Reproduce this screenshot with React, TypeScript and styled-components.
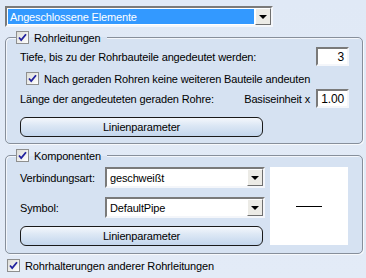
import styled, { createGlobalStyle } from 'styled-components';

const GlobalStyle = createGlobalStyle`
  html, body, #root {
    margin: 0;
    padding: 0;
  }
  body {
    background: linear-gradient(#e0e9f6, #e3ebf7);
    font-family: 'Liberation Sans', Arial, sans-serif;
    font-size: 11px;
    letter-spacing: -0.15px;
    color: #000;
  }
`;

const Page = styled.div`
  width: 366px;
  height: 278px;
  box-sizing: border-box;
  padding: 6px 3px 0 5px;
  display: flex;
  flex-direction: column;
`;

// sunken win32 style box
const Sunken = styled.div<{ $w: number; $h: number }>`
  width: ${p => p.$w}px;
  height: ${p => p.$h}px;
  box-sizing: border-box;
  border-style: solid;
  border-width: 2px;
  border-color: #7a7a7a #f4f6fa #f4f6fa #7a7a7a;
  background: #fff;
  display: flex;
  align-items: stretch;
`;

const ComboText = styled.div<{ $selected?: boolean }>`
  flex: 1;
  display: flex;
  align-items: center;
  padding-left: 2px;
  margin: 1px;
  background: ${p => (p.$selected ? '#3399ff' : '#fff')};
  color: ${p => (p.$selected ? '#fff' : '#000')};
  white-space: nowrap;
  overflow: hidden;
`;

const ArrowButton = styled.div`
  width: 16px;
  box-sizing: border-box;
  border-style: solid;
  border-width: 1px;
  border-color: #fff #6f6f6f #6f6f6f #fff;
  background: #ecebe6;
  display: flex;
  align-items: center;
  justify-content: center;
  &::after {
    content: '';
    border-left: 4px solid transparent;
    border-right: 4px solid transparent;
    border-top: 4px solid #000;
    margin-top: 1px;
  }
`;

const Combo = ({ w, h, text, selected }: { w: number; h: number; text: string; selected?: boolean }) => (
  <Sunken $w={w} $h={h}>
    <ComboText $selected={selected}>{text}</ComboText>
    <ArrowButton />
  </Sunken>
);

const NumberBox = styled(Sunken)`
  justify-content: flex-end;
  align-items: center;
  padding-right: 3px;
  font-size: 12px;
`;

const Group = styled.fieldset<{ $h: number; $mt: number }>`
  margin: ${p => p.$mt}px 0 0 0;
  height: ${p => p.$h}px;
  box-sizing: border-box;
  border: 1px solid #878f9b;
  border-radius: 5px;
  box-shadow: 1px 1px 0 #f7f9fc, inset 1px 1px 0 #f3f6fb;
  background: #d6e2f2;
  padding: 0 13px 0 14px;
  display: flex;
  flex-direction: column;
`;

const Legend = styled.legend`
  padding: 0 6px 0 0;
  margin-left: -4px;
  background: linear-gradient(#e0e9f6, #e0e9f6 50%, #d6e2f2 50%);
`;

const CheckRow = styled.label<{ $indent?: number }>`
  display: flex;
  align-items: center;
  gap: 5px;
  margin-left: ${p => p.$indent || 0}px;
  white-space: nowrap;
`;

const Box = styled.span`
  width: 13px;
  height: 13px;
  box-sizing: border-box;
  border: 1px solid #8e8f8f;
  background: linear-gradient(135deg, #dcdcd7, #fff);
  display: inline-flex;
  align-items: center;
  justify-content: center;
`;

const Check = ({ children, indent }: { children: string; indent?: number }) => (
  <CheckRow $indent={indent}>
    <Box>
      <svg width="9" height="9" viewBox="0 0 9 9">
        <path d="M1 4.5 L3.2 7 L8 1.2" stroke="#21219e" strokeWidth="1.8" fill="none" />
      </svg>
    </Box>
    {children}
  </CheckRow>
);

const Row = styled.div<{ $mt: number }>`
  display: flex;
  align-items: center;
  margin-top: ${p => p.$mt}px;
  white-space: nowrap;
`;

const Spacer = styled.div`
  flex: 1;
`;

const Unit = styled.span`
  margin-right: 6px;
`;

const PillButton = styled.div<{ $mt: number }>`
  width: 243px;
  height: 20px;
  margin-top: ${p => p.$mt}px;
  box-sizing: border-box;
  border: 1px solid #1a1a1a;
  border-radius: 6px;
  background: linear-gradient(#f4f7fc, #dde8f5 40%, #c3d6ed);
  display: flex;
  align-items: center;
  justify-content: center;
`;

const CompBody = styled.div`
  display: flex;
  gap: 5px;
  margin-top: 5px;
`;

const CompFields = styled.div`
  display: flex;
  flex-direction: column;
`;

const Label = styled.span`
  width: 85px;
`;

const Preview = styled.div`
  width: 78px;
  height: 78px;
  background: #fff;
  display: flex;
  align-items: center;
  justify-content: center;
  &::after {
    content: '';
    width: 26px;
    height: 1px;
    border-top: 1px solid #000;
    margin-top: 1px;
  }
`;

export default function App() {
  return (
    <>
      <GlobalStyle />
      <Page>
        <Combo w={268} h={21} text="Angeschlossene Elemente" selected />
        <Group $h={113} $mt={4}>
          <Legend>
            <Check>Rohrleitungen</Check>
          </Legend>
          <Row $mt={3}>
            Tiefe, bis zu der Rohrbauteile angedeutet werden:
            <Spacer />
            <NumberBox $w={33} $h={19}>3</NumberBox>
          </Row>
          <Row $mt={6}>
            <Check indent={6}>Nach geraden Rohren keine weiteren Bauteile andeuten</Check>
          </Row>
          <Row $mt={4}>
            Länge der angedeuteten geraden Rohre:
            <Spacer />
            <Unit>Basiseinheit x</Unit>
            <NumberBox $w={33} $h={19}>1.00</NumberBox>
          </Row>
          <PillButton $mt={9}>Linienparameter</PillButton>
        </Group>
        <Group $h={105} $mt={5}>
          <Legend>
            <Check>Komponenten</Check>
          </Legend>
          <CompBody>
            <CompFields>
              <Row $mt={0}>
                <Label>Verbindungsart:</Label>
                <Combo w={160} h={21} text="geschweißt" />
              </Row>
              <Row $mt={9}>
                <Label>Symbol:</Label>
                <Combo w={160} h={21} text="DefaultPipe" />
              </Row>
              <PillButton $mt={8}>Linienparameter</PillButton>
            </CompFields>
            <Preview />
          </CompBody>
        </Group>
        <Row $mt={5} style={{ marginLeft: 2 }}>
          <Check>Rohrhalterungen anderer Rohrleitungen</Check>
        </Row>
      </Page>
    </>
  );
}
